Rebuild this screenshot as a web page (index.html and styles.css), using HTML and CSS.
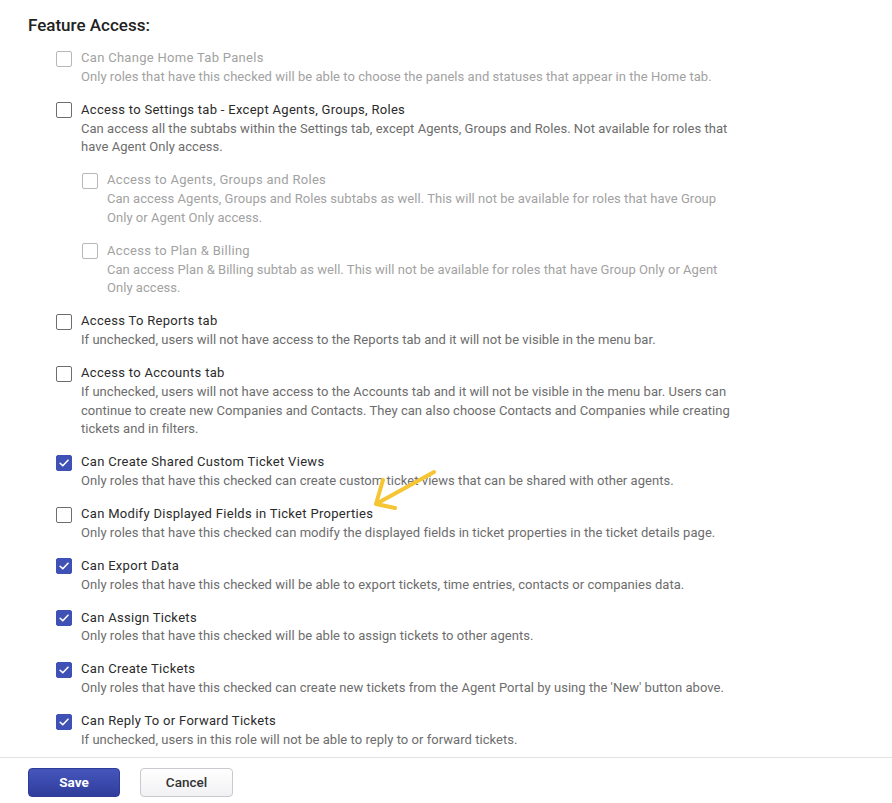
FILE: index.html
```html
<!DOCTYPE html>
<html lang="en">
<head>
<meta charset="utf-8">
<title>Feature Access</title>
<link rel="stylesheet" href="styles.css">
</head>
<body>
<div class="page">
  <h2 class="heading">Feature Access:</h2>
  <div class="list">
    <div class="item disabled">
      <span class="box"></span>
      <div class="text">
        <div class="title">Can Change Home Tab Panels</div>
        <div class="desc">Only roles that have this checked will be able to choose the panels and statuses that appear in the Home tab.</div>
      </div>
    </div>
    <div class="item">
      <span class="box"></span>
      <div class="text">
        <div class="title">Access to Settings tab - Except Agents, Groups, Roles</div>
        <div class="desc">Can access all the subtabs within the Settings tab, except Agents, Groups and Roles. Not available for roles that have Agent Only access.</div>
      </div>
    </div>
    <div class="item nested disabled">
      <span class="box"></span>
      <div class="text">
        <div class="title">Access to Agents, Groups and Roles</div>
        <div class="desc">Can access Agents, Groups and Roles subtabs as well. This will not be available for roles that have Group Only or Agent Only access.</div>
      </div>
    </div>
    <div class="item nested disabled">
      <span class="box"></span>
      <div class="text">
        <div class="title">Access to Plan &amp; Billing</div>
        <div class="desc">Can access Plan &amp; Billing subtab as well. This will not be available for roles that have Group Only or Agent Only access.</div>
      </div>
    </div>
    <div class="item">
      <span class="box"></span>
      <div class="text">
        <div class="title">Access To Reports tab</div>
        <div class="desc">If unchecked, users will not have access to the Reports tab and it will not be visible in the menu bar.</div>
      </div>
    </div>
    <div class="item">
      <span class="box"></span>
      <div class="text">
        <div class="title">Access to Accounts tab</div>
        <div class="desc">If unchecked, users will not have access to the Accounts tab and it will not be visible in the menu bar. Users can continue to create new Companies and Contacts. They can also choose Contacts and Companies while creating tickets and in filters.</div>
      </div>
    </div>
    <div class="item">
      <span class="box checked"><svg viewBox="0 0 16 16"><path d="M3.6 8.3 L6.6 11.2 L12.6 4.8"/></svg></span>
      <div class="text">
        <div class="title">Can Create Shared Custom Ticket Views</div>
        <div class="desc">Only roles that have this checked can create custom ticket views that can be shared with other agents.</div>
      </div>
    </div>
    <div class="item">
      <span class="box"></span>
      <div class="text">
        <div class="title">Can Modify Displayed Fields in Ticket Properties</div>
        <div class="desc">Only roles that have this checked can modify the displayed fields in ticket properties in the ticket details page.</div>
      </div>
    </div>
    <div class="item">
      <span class="box checked"><svg viewBox="0 0 16 16"><path d="M3.6 8.3 L6.6 11.2 L12.6 4.8"/></svg></span>
      <div class="text">
        <div class="title">Can Export Data</div>
        <div class="desc">Only roles that have this checked will be able to export tickets, time entries, contacts or companies data.</div>
      </div>
    </div>
    <div class="item">
      <span class="box checked"><svg viewBox="0 0 16 16"><path d="M3.6 8.3 L6.6 11.2 L12.6 4.8"/></svg></span>
      <div class="text">
        <div class="title">Can Assign Tickets</div>
        <div class="desc">Only roles that have this checked will be able to assign tickets to other agents.</div>
      </div>
    </div>
    <div class="item">
      <span class="box checked"><svg viewBox="0 0 16 16"><path d="M3.6 8.3 L6.6 11.2 L12.6 4.8"/></svg></span>
      <div class="text">
        <div class="title">Can Create Tickets</div>
        <div class="desc">Only roles that have this checked can create new tickets from the Agent Portal by using the 'New' button above.</div>
      </div>
    </div>
    <div class="item">
      <span class="box checked"><svg viewBox="0 0 16 16"><path d="M3.6 8.3 L6.6 11.2 L12.6 4.8"/></svg></span>
      <div class="text">
        <div class="title">Can Reply To or Forward Tickets</div>
        <div class="desc">If unchecked, users in this role will not be able to reply to or forward tickets.</div>
      </div>
    </div>
  </div>
  <svg class="arrow" width="892" height="803" viewBox="0 0 892 803">
    <path d="M434 472 L376 504 M383 480 L376 504 L395 508"/>
  </svg>
</div>
<div class="footer">
  <button class="btn save">Save</button>
  <button class="btn cancel">Cancel</button>
</div>
</body>
</html>
```

FILE: styles.css
```css
html, body {
  margin: 0;
  padding: 0;
  background: #ffffff;
  font-family: Roboto, "Liberation Sans", Arial, sans-serif;
  color: #333333;
}

.page {
  padding: 15px 28px 7px 28px;
}

.heading {
  margin: 0;
  font-size: 17px;
  font-weight: 500;
  line-height: 20px;
  color: #222222;
}

.list {
  margin-top: 14px;
  padding-left: 28px;
  width: 684px;
  display: flex;
  flex-direction: column;
  gap: 14.4px;
}

.item {
  display: flex;
  align-items: flex-start;
  gap: 9px;
}

.item.nested {
  padding-left: 26px;
}

.box {
  flex: none;
  width: 16px;
  height: 16px;
  box-sizing: border-box;
  margin-top: 1.5px;
  border: 1px solid #6e6e6e;
  border-radius: 2px;
  background: #ffffff;
  display: flex;
}

.box.checked {
  background: #3f51b5;
  border-color: #3f51b5;
}

.box svg {
  width: 14px;
  height: 14px;
}

.box svg path {
  fill: none;
  stroke: #ffffff;
  stroke-width: 1.8;
  stroke-linecap: round;
  stroke-linejoin: round;
}

.text {
  font-size: 13px;
  line-height: 18.7px;
}

.title {
  color: #2b2b2b;
  letter-spacing: 0.3px;
}

.desc {
  color: #6d6d6d;
  letter-spacing: 0.04px;
}

.disabled .box {
  border-color: #b8b8b8;
}

.disabled .title,
.disabled .desc {
  color: #a2a2a2;
}

.arrow {
  position: absolute;
  left: 0;
  top: 0;
  pointer-events: none;
}

.arrow path {
  fill: none;
  stroke: #f6c533;
  stroke-width: 4;
  stroke-linecap: round;
  stroke-linejoin: round;
}

.footer {
  border-top: 1px solid #e2e2e4;
  padding: 10px 28px;
  display: flex;
  gap: 20px;
}

.btn {
  height: 29px;
  border-radius: 4px;
  font-family: Roboto, "Liberation Sans", Arial, sans-serif;
  font-size: 13.5px;
  font-weight: 700;
  padding: 0;
  cursor: pointer;
}

.save {
  width: 92px;
  color: #ffffff;
  border: 1px solid #2f3c98;
  background: linear-gradient(#4555bb, #2f3d9c);
}

.cancel {
  width: 93px;
  color: #333333;
  border: 1px solid #c9c9cf;
  background: linear-gradient(#ffffff, #f1f1f4);
  font-weight: 500;
}
```
